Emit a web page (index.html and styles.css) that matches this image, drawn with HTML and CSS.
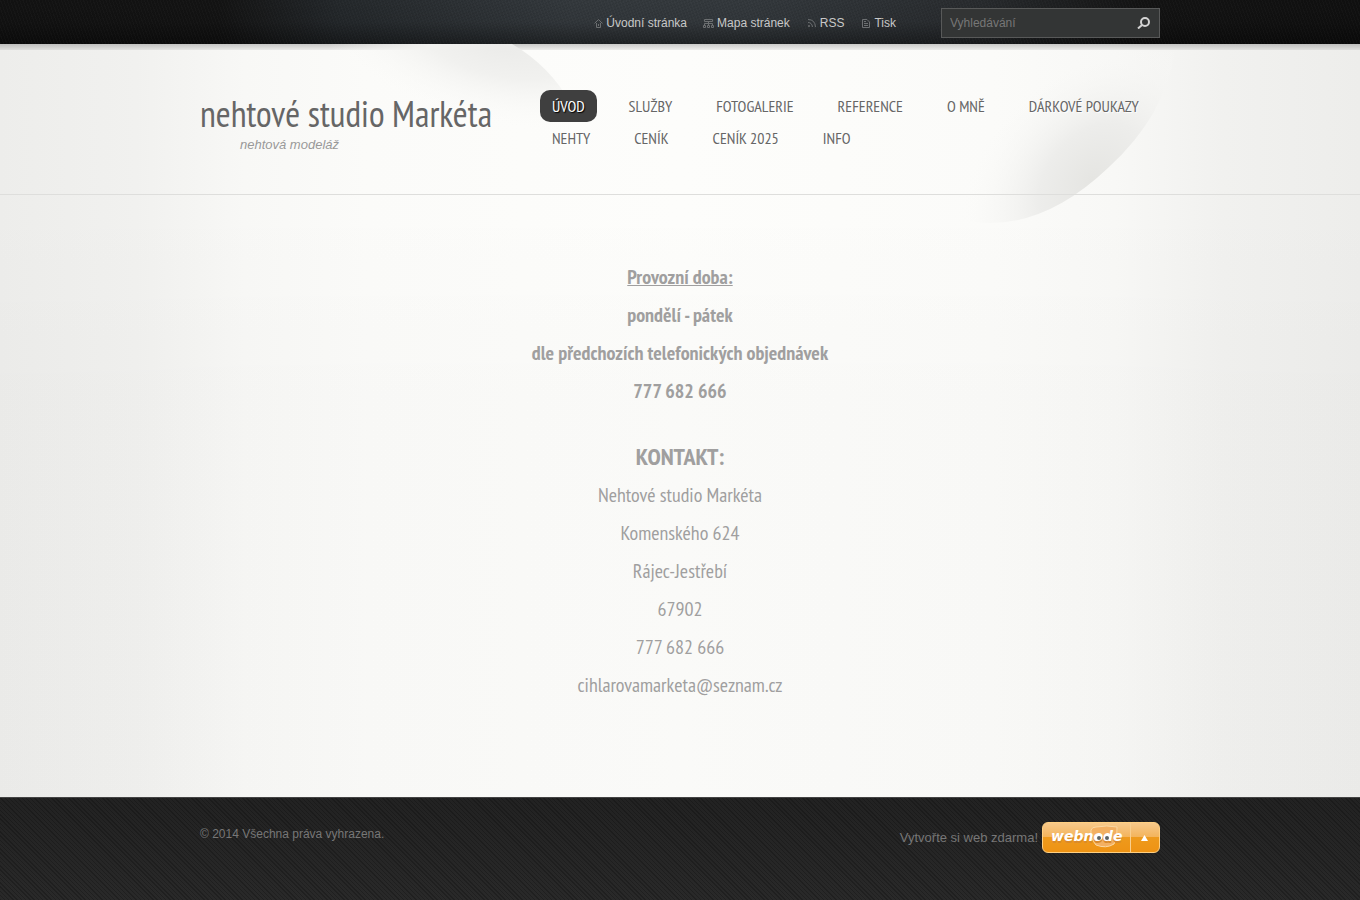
FILE: index.html
```html
<!DOCTYPE html>
<html lang="cs">

<head>
    <meta charset="UTF-8">
    <meta name="viewport" content="width=device-width, initial-scale=1.0">
    <title>nehtové studio Markéta</title>
    <link rel="stylesheet" href="styles.css">
</head>

<body>

    <div class="topbar">
        <div class="container topbar-in">
            <ul class="lang">
                <li><a href="#">
                    <svg width="11" height="9" viewBox="-2 0 11 9"><path d="M0.500 4.5L4.5 0.5L8.5 4.5M2.5 4v4.5h4V4M4.5 5v2"/></svg>
                    Úvodní stránka</a></li>
                <li><a href="#">
                    <svg width="11" height="9" viewBox="0 0 11 9"><path d="M1.5 0.5h8v2h-8zM5.5 2.5v4M1.5 6.5v-2h8v2M0.5 6.5h2v2h-2zM4.5 6.5h2v2h-2zM8.5 6.5h2v2h-2z"/></svg>
                    Mapa stránek</a></li>
                <li><a href="#">
                    <svg width="11" height="9" viewBox="-2 0 11 9"><path d="M0 0.5Q7 0.500 7.500 8M0 3.5Q4 3.5 4.500 8M0.5 6.5h1v1h-1z"/></svg>
                    RSS</a></li>
                <li><a href="#">
                    <svg width="11" height="9" viewBox="-2 0 11 9"><path d="M0.5 0.5h4.500l2.5 2.5v5.5h-7zM2 4.5h4M2 6.5h4M2 2.500h2"/></svg>
                    Tisk</a></li>
            </ul>
            <form class="search">
                <input type="text" placeholder="Vyhledávání" aria-label="Vyhledávání">
                <button type="button" aria-label="Hledat">
                    <svg width="13" height="12" viewBox="0 0 13 12"><circle cx="8" cy="5" r="4"/><path d="M5 8L1 11.500"/></svg>
                </button>
            </form>
        </div>
    </div>

    <div class="page">
        <!-- světlé listy v pozadí -->
        <svg class="leaves" width="960" height="200" viewBox="0 0 960 200">
            <defs>
                <radialGradient id="leaf1" gradientUnits="userSpaceOnUse" cx="0" cy="0" r="1" gradientTransform="translate(300 0) rotate(12) scale(190 80)">
                    <stop offset="0" stop-color="#ebebe9"/>
                    <stop offset="0.4" stop-color="#f1f1ef"/>
                    <stop offset="1" stop-color="#fbfbf9" stop-opacity="0"/>
                </radialGradient>
                <radialGradient id="leaf2" gradientUnits="userSpaceOnUse" cx="0" cy="0" r="1" gradientTransform="translate(892 136) rotate(-50) scale(160 112)">
                    <stop offset="0" stop-color="#e5e5e2"/>
                    <stop offset="0.4" stop-color="#ededeb"/>
                    <stop offset="1" stop-color="#fbfbf9" stop-opacity="0"/>
                </radialGradient>
            </defs>
            <path fill="url(#leaf1)" d="M100 0H312Q350 22 371 60V90H100z"/>
            <path fill="url(#leaf2)" d="M975 8Q965 72 908 124Q850 179 790 179Q770 178 760 175V8z"/>
        </svg>

        <header class="header">
            <div class="container header-in">
                <div class="logo">
                    <h1><a href="#">nehtové studio Markéta</a></h1>
                    <p>nehtová modeláž</p>
                </div>
                <ul class="menu">
                    <li><a class="active" href="#">Úvod</a></li>
                    <li><a href="#">Služby</a></li>
                    <li><a href="#">Fotogalerie</a></li>
                    <li><a href="#">Reference</a></li>
                    <li><a href="#">O mně</a></li>
                    <li><a href="#">Dárkové poukazy</a></li>
                    <li><a href="#">Nehty</a></li>
                    <li><a href="#">Ceník</a></li>
                    <li><a href="#">Ceník 2025</a></li>
                    <li><a href="#">Info</a></li>
                </ul>
            </div>
        </header>

        <main class="container content">
            <section>
                <h3><u>Provozní doba:</u></h3>
                <h3>pondělí - pátek</h3>
                <h3>dle předchozích telefonických objednávek</h3>
                <h3>777 682 666</h3>
            </section>
            <section>
                <h2>KONTAKT:</h2>
                <p>Nehtové studio Markéta</p>
                <p>Komenského 624</p>
                <p>Rájec-Jestřebí</p>
                <p>67902</p>
                <p>777 682 666</p>
                <p>cihlarovamarketa@seznam.cz</p>
            </section>
        </main>
    </div>

    <footer class="footer">
        <div class="container footer-in">
            <p class="copy">© 2014 Všechna práva vyhrazena.</p>
            <div class="sign">
                <a href="#">Vytvořte si web zdarma!</a>
                <a class="webnode" href="#" aria-label="Webnode">
                    <svg width="87" height="28" viewBox="0 0 87 28">
                        <path class="face" d="M48 7Q49 4 53 4Q64 2 74 4Q75 13 71 21Q63 26 53 22Q47 15 48 7z"/>
                        <text class="word-shadow" x="8" y="20">webnode</text>
                        <text class="word" x="8" y="18">webnode</text>
                        <circle class="white" cx="56" cy="14" r="3"/>
                        <circle class="white" cx="64" cy="14" r="3"/>
                        <circle class="eye" cx="56" cy="15" r="2"/>
                        <circle class="eye" cx="64" cy="15" r="2"/>
                    </svg>
                    <span class="up"><svg width="7" height="6" viewBox="0 0 7 6"><path d="M3.5 0L7 6H0z"/></svg></span>
                </a>
            </div>
        </div>
    </footer>

</body>

</html>
```

FILE: styles.css
```css
* {
    margin: 0;
    padding: 0;
    box-sizing: border-box;
}

body {
    min-height: 100vh;
    display: flex;
    flex-direction: column;
    background: #222;
    font-family: Arial, "Liberation Sans", sans-serif;
    font-size: 12px;
}

a {
    color: inherit;
    text-decoration: none;
}

ul {
    list-style: none;
}

.container {
    width: 100%;
    max-width: 960px;
    margin: 0 auto;
}

/* horní lišta */
.topbar {
    background:
        repeating-linear-gradient(70deg, rgba(255, 255, 255, 0.02) 0 1px, transparent 1px 3px),
        repeating-linear-gradient(160deg, rgba(0, 0, 0, 0.06) 0 1px, transparent 1px 3px),
        linear-gradient(rgba(0, 0, 0, 0), rgba(0, 0, 0, 0.05) 50%, rgba(0, 0, 0, 0.4)),
        linear-gradient(90deg, #121212 0, #131313 16%, #24282b 25%, #33383c 42%, #33383c 55%, #282b2e 72%, #131313 84%, #101010 100%);
}

.topbar-in {
    display: flex;
    justify-content: flex-end;
    align-items: center;
    gap: 45px;
    padding: 8px 0 6px;
}

.lang {
    display: flex;
    gap: 16px;
    color: #c8c8c8;
}

.lang a {
    display: flex;
    align-items: center;
    gap: 3px;
}

.lang svg {
    fill: none;
    stroke: #6c6f71;
}

.search {
    display: flex;
    width: 219px;
    height: 30px;
    background: #333535;
    border: 1px solid #585959;
}

.search input {
    flex: 1;
    min-width: 0;
    padding: 0 8px;
    background: none;
    border: 0;
    outline: 0;
    color: #ccc;
    font: inherit;
}

.search input::placeholder {
    color: #777;
}

.search button {
    width: 32px;
    background: none;
    border: 0;
}

.search svg {
    display: block;
    margin: 0 auto;
    fill: none;
    stroke: #d4d4d4;
    stroke-width: 2;
}

/* hlavička a obsah */
.page {
    position: relative;
    flex: 1;
    background:
        linear-gradient(rgba(0, 0, 0, 0.2), rgba(0, 0, 0, 0.06) 6px, transparent 6px),
        linear-gradient(transparent 150px, rgba(0, 0, 0, 0.01) 350px),
        linear-gradient(90deg, #ededeb 0, #f1f1ef 10%, #f8f8f6 18%, #fbfbf9 27%, #fdfdfb 50%, #fbfbf9 73%, #f8f8f6 82%, #f1f1ef 90%, #ededeb 100%);
}

.leaves {
    position: absolute;
    top: 0;
    left: 50%;
    margin-left: -480px;
    overflow: visible;
}

.header {
    position: relative;
    border-bottom: 1px solid #dededc;
}

.header-in {
    display: flex;
    padding: 46px 0 40px;
}

.logo {
    width: 340px;
    color: #666;
}

.logo h1 {
    font-family: "PT Sans Narrow", "Liberation Sans Narrow", "Liberation Sans", sans-serif;
    font-size: 36px;
    font-weight: normal;
    line-height: 48px;
    white-space: nowrap;
}

.logo p {
    padding-left: 40px;
    color: #999;
    font-size: 13px;
    font-style: italic;
    line-height: 14px;
}

.menu {
    flex: 1;
    display: flex;
    flex-wrap: wrap;
    align-content: flex-start;
    column-gap: 20px;
}

.menu a {
    display: block;
    padding: 0 12px;
    border-radius: 10px;
    color: #666;
    font-family: "PT Sans Narrow", "Liberation Sans Narrow", "Liberation Sans", sans-serif;
    font-size: 16px;
    line-height: 32px;
    text-transform: uppercase;
    text-shadow: 1px 1px 1px #fff;
}

.menu .active {
    background: #3f3f3f;
    color: #fff;
    text-shadow: 1px 1px 1px #000;
}

.content {
    position: relative;
    padding: 63px 0 92px;
    color: #a09f9f;
    font-family: "PT Sans Narrow", "Liberation Sans Narrow", "Liberation Sans", sans-serif;
    font-size: 20px;
    line-height: 38px;
    text-align: center;
}

.content section + section {
    margin-top: 28px;
}

.content h2 {
    font-size: 24px;
}

.content h3 {
    font-size: 20px;
}

.content u {
    text-decoration-thickness: 1px;
}

/* patička */
.footer {
    min-height: 103px;
    border-top: 1px solid #444;
    background:
        repeating-linear-gradient(45deg, rgba(0, 0, 0, 0.22) 0 1px, transparent 1px 3px),
        linear-gradient(#222, #292929);
    color: #777;
}

.footer-in {
    display: flex;
    justify-content: space-between;
    padding: 24px 0 46px;
}

.copy {
    padding-top: 2px;
    line-height: 20px;
}

.sign {
    display: flex;
    align-items: center;
    gap: 4px;
    font-size: 13px;
}

.webnode {
    display: flex;
    height: 31px;
    border: 1px solid #ffd082;
    border-radius: 6px;
    background: linear-gradient(#f7c98a, #f3b35a 50%, #ee9a1c 50%, #ee9314);
}

.face {
    fill: #f3b062;
    stroke: #fbd9a4;
}

.word,
.word-shadow {
    font-family: "DejaVu Sans", sans-serif;
    font-size: 14px;
    font-style: italic;
    font-weight: bold;
    fill: #fff;
}

.word-shadow {
    fill: #d98a2c;
}

.white {
    fill: #fff;
}

.eye {
    fill: #5d6265;
}

.up {
    display: flex;
    align-items: center;
    width: 29px;
    padding-left: 10px;
    border-left: 1px solid #f9cf8e;
    fill: #fff;
}
```
